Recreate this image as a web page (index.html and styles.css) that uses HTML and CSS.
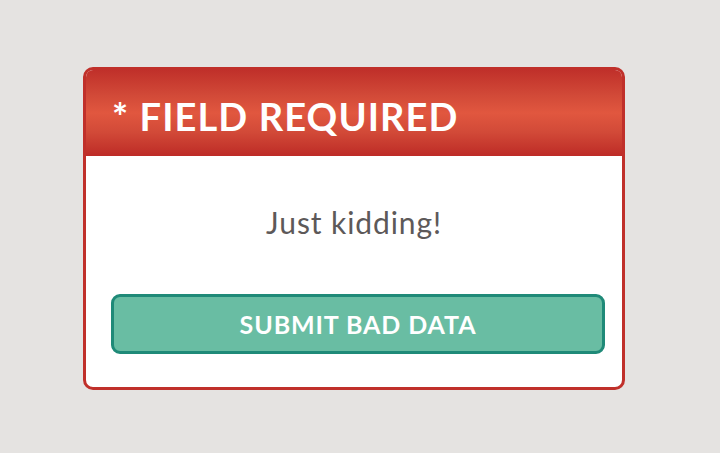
FILE: index.html
```html
<!DOCTYPE html>
<html>
<head>
<meta charset="utf-8">
<link rel="stylesheet" href="styles.css">
</head>
<body>
  <div class="card">
    <div class="card-header">
      <h1 class="title">* FIELD REQUIRED</h1>
    </div>
    <div class="card-body">
      <p class="message">Just kidding!</p>
      <button class="submit">SUBMIT BAD DATA</button>
    </div>
  </div>
</body>
</html>
```

FILE: styles.css
```css
html, body {
  margin: 0;
  padding: 0;
}
body {
  background: #e5e3e1;
  width: 720px;
  height: 453px;
  font-family: "Lato", "Open Sans", sans-serif;
  padding: 67px 0 0 83px;
  box-sizing: border-box;
}
.card {
  box-sizing: border-box;
  width: 542px;
  height: 323px;
  border: 3px solid #c0302a;
  border-radius: 10px;
  background: #ffffff;
  overflow: hidden;
  display: flex;
  flex-direction: column;
}
.card-header {
  height: 86px;
  display: flex;
  align-items: center;
  padding-left: 26px;
  background: linear-gradient(to bottom, #c0302a 0%, #d24a38 30%, #e1573f 50%, #d24a38 72%, #bd2b26 100%);
}
.title {
  margin: 0;
  padding-top: 6px;
  color: #ffffff;
  font-weight: 700;
  font-size: 38px;
  letter-spacing: 1.1px;
}
.card-body {
  flex: 1;
  display: flex;
  flex-direction: column;
}
.message {
  margin: 46px 0 0 0;
  line-height: 40px;
  height: 40px;
  text-align: center;
  color: #5d5959;
  font-size: 30px;
  font-weight: 400;
  letter-spacing: 0.9px;
}
.submit {
  margin: 52px 17px 0 25px;
  height: 60px;
  box-sizing: border-box;
  border: 3px solid #1f8a78;
  border-radius: 9px;
  background: #69bda3;
  color: #ffffff;
  font-family: "Lato", "Open Sans", sans-serif;
  font-weight: 700;
  font-size: 25px;
  letter-spacing: 0.9px;
  padding: 0;
}
```
